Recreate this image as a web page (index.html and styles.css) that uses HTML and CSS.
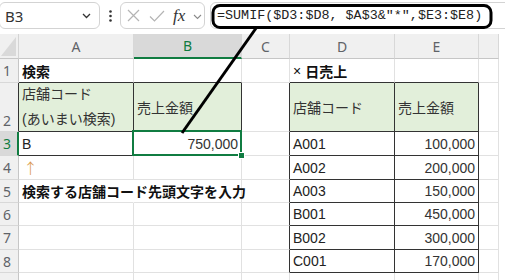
FILE: index.html
```html
<!DOCTYPE html>
<html lang="ja">
<head>
<meta charset="utf-8">
<link rel="stylesheet" href="styles.css">
</head>
<body>
<div class="app">
  <div class="toolbar">
    <div class="namebox">
      <span>B3</span>
      <svg class="chev" width="9" height="6" viewBox="0 0 9 6"><path d="M1 1 L4.5 4.5 L8 1" fill="none" stroke="#333" stroke-width="1.3"/></svg>
    </div>
    <div class="dots">
      <svg width="3" height="12" viewBox="0 0 3 12"><circle cx="1.5" cy="1.5" r="1.3" fill="#333"/><circle cx="1.5" cy="6" r="1.3" fill="#333"/><circle cx="1.5" cy="10.5" r="1.3" fill="#333"/></svg>
    </div>
    <div class="fxbox">
      <svg class="ico-x" width="13" height="13" viewBox="0 0 13 13"><path d="M1 1 L12 12 M12 1 L1 12" stroke="#b4b4b4" stroke-width="1.2" fill="none"/></svg>
      <svg class="ico-check" width="16" height="12" viewBox="0 0 16 12"><path d="M1 6.5 L5.5 11 L15 1" stroke="#b4b4b4" stroke-width="1.2" fill="none"/></svg>
      <span class="fx">fx</span>
      <svg class="ico-chev" width="9" height="6" viewBox="0 0 9 6"><path d="M1 1 L4.5 4.5 L8 1" fill="none" stroke="#8a8a8a" stroke-width="1.1"/></svg>
    </div>
    <div class="formula">=SUMIF($D3:$D8, $A$3&amp;"*",$E3:$E8)</div>
  </div>

  <div class="sheet">
    <!-- header row -->
    <div class="corner"><svg width="15" height="19" viewBox="0 0 15 19"><path d="M15 0 L15 19 L0 19 Z" fill="#d9d9d9"/></svg></div>
    <div class="ch">A</div>
    <div class="ch sel">B</div>
    <div class="ch">C</div>
    <div class="ch">D</div>
    <div class="ch">E</div>
    <div class="ch"></div>

    <!-- row 1 -->
    <div class="rh">1</div>
    <div class="c b bb-d">検索</div>
    <div class="c bb-d"></div>
    <div class="c"></div>
    <div class="c b bb-d"><span class="times">×</span>日売上</div>
    <div class="c bb-d"></div>
    <div class="c"></div>

    <!-- row 2 -->
    <div class="rh rh-dark r2">2</div>
    <div class="c hd d two"><span>店舗コード</span><span>(あいまい検索)</span></div>
    <div class="c hd d">売上金額</div>
    <div class="c br-d"></div>
    <div class="c hd d">店舗コード</div>
    <div class="c hd d">売上金額</div>
    <div class="c"></div>

    <!-- row 3 -->
    <div class="rh sel">3</div>
    <div class="c d">B</div>
    <div class="c d num selcell">750,000<span class="selbox"></span><span class="handle"></span></div>
    <div class="c br-d"></div>
    <div class="c d">A001</div>
    <div class="c d num">100,000</div>
    <div class="c"></div>

    <!-- row 4 -->
    <div class="rh">4</div>
    <div class="c arrow">↑</div>
    <div class="c"></div>
    <div class="c br-d"></div>
    <div class="c d">A002</div>
    <div class="c d num">200,000</div>
    <div class="c"></div>

    <!-- row 5 -->
    <div class="rh">5</div>
    <div class="c b spill">検索する店舗コード先頭文字を入力</div>
    <div class="c"></div>
    <div class="c br-d"></div>
    <div class="c d">A003</div>
    <div class="c d num">150,000</div>
    <div class="c"></div>

    <!-- row 6 -->
    <div class="rh">6</div>
    <div class="c"></div>
    <div class="c"></div>
    <div class="c br-d"></div>
    <div class="c d">B001</div>
    <div class="c d num">450,000</div>
    <div class="c"></div>

    <!-- row 7 -->
    <div class="rh">7</div>
    <div class="c"></div>
    <div class="c"></div>
    <div class="c br-d"></div>
    <div class="c d">B002</div>
    <div class="c d num">300,000</div>
    <div class="c"></div>

    <!-- row 8 -->
    <div class="rh">8</div>
    <div class="c"></div>
    <div class="c"></div>
    <div class="c br-d"></div>
    <div class="c d">C001</div>
    <div class="c d num">170,000</div>
    <div class="c"></div>

    <!-- row 9 -->
    <div class="rh"></div>
    <div class="c"></div>
    <div class="c"></div>
    <div class="c"></div>
    <div class="c"></div>
    <div class="c"></div>
    <div class="c"></div>
  </div>

  <svg class="annot" width="505" height="280" viewBox="0 0 505 280">
    <rect x="213" y="5.5" width="278" height="22" rx="7" ry="7" fill="none" stroke="#000" stroke-width="3"/>
    <path d="M256.5 27.5 L182 133" stroke="#000" stroke-width="3" fill="none"/>
  </svg>
</div>
</body>
</html>
```

FILE: styles.css
```css
* {
  box-sizing: border-box;
}

body {
  margin: 0;
  background: #ffffff;
  font-family: "Liberation Sans", "Noto Sans CJK JP", sans-serif;
}

.app {
  position: relative;
  width: 505px;
  height: 280px;
  overflow: hidden;
  background: #ffffff;
}

/* ---------- formula bar ---------- */
.toolbar {
  height: 34px;
  display: flex;
  align-items: flex-start;
  padding-top: 2px;
}

.namebox {
  width: 101px;
  height: 27px;
  margin-left: -1px;
  border: 1px solid #d3d3d3;
  border-radius: 6px;
  display: flex;
  align-items: center;
  justify-content: space-between;
  padding: 0 8px 0 5px;
  font-family: "Noto Sans", sans-serif;
  font-size: 15px;
  color: #333333;
}

.dots {
  width: 20px;
  height: 27px;
  display: flex;
  align-items: center;
  justify-content: center;
}

.fxbox {
  width: 85px;
  height: 27px;
  border: 1px solid #d3d3d3;
  border-radius: 6px;
  display: flex;
  align-items: center;
  padding-left: 6px;
}

.ico-check {
  margin-left: 9px;
}

.fx {
  margin-left: 8px;
  width: 17px;
  font-family: "Liberation Serif", serif;
  font-style: italic;
  font-size: 17px;
  color: #333333;
  line-height: 20px;
}

.ico-chev {
  margin-left: 3px;
  margin-top: 2px;
}

.formula {
  flex: 1;
  height: 27px;
  margin-left: 5px;
  margin-right: -10px;
  border: 1px solid #d3d3d3;
  border-radius: 6px;
  padding-left: 6px;
  font-family: "Liberation Mono", monospace;
  font-size: 13.4px;
  line-height: 25px;
  color: #222222;
  white-space: nowrap;
}

/* ---------- grid ---------- */
.sheet {
  display: grid;
  grid-template-columns: 19px 115px 108px 48px 105px 84px 20px;
  grid-template-rows: 25px 24px 49px 24px 24px 23px 23px 24px 23px 24px;
  width: 499px;
}

.corner {
  background: #f0f0f0;
  border-right: 1px solid #d4d4d4;
  border-bottom: 1px solid #c6c6c6;
  display: flex;
  align-items: flex-end;
  justify-content: flex-end;
  padding: 0 2px 2px 0;
}

.ch {
  background: #f0f0f0;
  border-right: 1px solid #d8d8d8;
  border-bottom: 1px solid #c6c6c6;
  display: flex;
  align-items: center;
  justify-content: center;
  font-family: "Noto Sans", sans-serif;
  font-size: 14px;
  color: #5f6368;
}

.ch.sel {
  background: #d9d9d9;
  border-bottom: 2px solid #107c41;
  color: #107c41;
}

.rh {
  background: #f0f0f0;
  border-right: 1px solid #c6c6c6;
  border-bottom: 1px solid #d8d8d8;
  display: flex;
  align-items: center;
  padding-left: 3px;
  font-family: "Noto Sans", sans-serif;
  font-size: 14px;
  color: #5f6368;
}

.rh.r2 {
  align-items: flex-end;
  padding-bottom: 1px;
}

.rh-dark {
  border-right-color: #333333;
}

.rh.sel {
  background: #d9d9d9;
  border-right: 2px solid #107c41;
  color: #107c41;
}

.c {
  border-right: 1px solid #e1e1e1;
  border-bottom: 1px solid #e1e1e1;
  display: flex;
  align-items: center;
  padding: 0 3px;
  font-size: 14px;
  color: #222222;
  white-space: nowrap;
  overflow: hidden;
}

.b {
  font-weight: bold;
  color: #111111;
}

.times {
  font-weight: normal;
  margin-right: 4px;
}

.hd {
  background: #e2efda;
  color: #333333;
}

.two {
  flex-direction: column;
  align-items: flex-start;
  justify-content: center;
  line-height: 25px;
}

.d {
  border-right-color: #333333;
  border-bottom-color: #333333;
}

.bb-d {
  border-bottom-color: #333333;
}

.br-d {
  border-right-color: #333333;
}

.num {
  justify-content: flex-end;
  color: #333333;
}

.arrow {
  font-family: "Noto Sans CJK JP", sans-serif;
  font-size: 15px;
  font-weight: 300;
  color: #d9974a;
  padding-left: 4px;
}

.spill {
  overflow: visible;
  border-right-color: transparent;
  position: relative;
  z-index: 2;
}

.selcell {
  position: relative;
  overflow: visible;
}

.selbox {
  position: absolute;
  left: -2px;
  top: -2px;
  right: -1px;
  bottom: -1px;
  border: 2px solid #107c41;
}

.handle {
  position: absolute;
  right: -4px;
  bottom: -4px;
  width: 7px;
  height: 7px;
  background: #107c41;
  border: 1px solid #ffffff;
}

/* ---------- annotation ---------- */
.annot {
  position: absolute;
  left: 0;
  top: 0;
  pointer-events: none;
  z-index: 5;
}
```
